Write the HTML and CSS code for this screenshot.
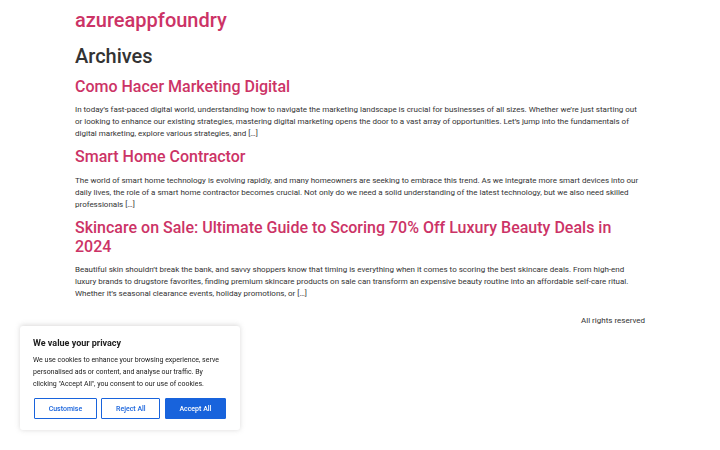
FILE: index.html
```html
<!DOCTYPE html>
<html lang="en">
<head>
<meta charset="utf-8">
<title>Archives - azureappfoundry</title>
<link rel="stylesheet" href="styles.css">
</head>
<body>
<header class="site-header">
  <div class="site-title"><a href="#">azureappfoundry</a></div>
</header>
<main class="site-main">
  <div class="page-header">
    <h1 class="entry-title">Archives</h1>
  </div>
  <div class="page-content">
    <article class="post">
      <h2 class="entry-title"><a href="#">Como Hacer Marketing Digital</a></h2>
      <p>In today’s fast-paced digital world, understanding how to navigate the marketing landscape is crucial for businesses of all sizes. Whether we’re just starting out or looking to enhance our existing strategies, mastering digital marketing opens the door to a vast array of opportunities. Let’s jump into the fundamentals of digital marketing, explore various strategies, and […]</p>
    </article>
    <article class="post">
      <h2 class="entry-title"><a href="#">Smart Home Contractor</a></h2>
      <p>The world of smart home technology is evolving rapidly, and many homeowners are seeking to embrace this trend. As we integrate more smart devices into our daily lives, the role of a smart home contractor becomes crucial. Not only do we need a solid understanding of the latest technology, but we also need skilled professionals […]</p>
    </article>
    <article class="post">
      <h2 class="entry-title"><a href="#">Skincare on Sale: Ultimate Guide to Scoring 70% Off Luxury Beauty Deals in 2024</a></h2>
      <p>Beautiful skin shouldn’t break the bank, and savvy shoppers know that timing is everything when it comes to scoring the best skincare deals. From high-end luxury brands to drugstore favorites, finding premium skincare products on sale can transform an expensive beauty routine into an affordable self-care ritual. Whether it’s seasonal clearance events, holiday promotions, or […]</p>
    </article>
  </div>
</main>
<footer class="site-footer">
  <p class="copyright">All rights reserved</p>
</footer>
<div class="cky-banner">
  <p class="cky-title">We value your privacy</p>
  <p class="cky-desc">We use cookies to enhance your browsing experience, serve personalised ads or content, and analyse our traffic. By clicking "Accept All", you consent to our use of cookies.</p>
  <div class="cky-btns">
    <button class="cky-btn cky-btn-outline">Customise</button>
    <button class="cky-btn cky-btn-outline">Reject All</button>
    <button class="cky-btn cky-btn-accept">Accept All</button>
  </div>
</div>
</body>
</html>
```
FILE: styles.css
```css
html, body {
  margin: 0;
  padding: 0;
}
body {
  background: #fff;
  color: #333333;
  font-family: Roboto, "Liberation Sans", sans-serif;
  font-size: 8px;
  line-height: 12px;
}
a {
  color: #cc3366;
  text-decoration: none;
}
.site-header,
.site-main,
.site-footer {
  max-width: 570px;
  margin: 0 auto;
}
.site-header {
  padding: 8px 0 0;
}
.site-title {
  font-size: 20px;
  line-height: 24px;
  font-weight: 500;
}
.page-header {
  padding-top: 12px;
}
h1, h2 {
  font-weight: 500;
  line-height: 1.2;
  margin: 0;
}
.page-header .entry-title {
  font-size: 20px;
  margin-bottom: 9px;
}
.post h2 {
  font-size: 16px;
  margin-bottom: 8px;
}
.post p {
  margin: 0 0 7.2px;
}
.site-footer {
  padding: 8px 0;
}
.copyright {
  margin: 0;
  text-align: right;
}
.cky-banner {
  position: fixed;
  left: 20px;
  bottom: 20px;
  width: 220px;
  box-sizing: border-box;
  padding: 11px 14px 11px 13px;
  background: #ffffff;
  border-radius: 3px;
  box-shadow: 0 -0.5px 5px 0 rgba(172, 171, 171, 0.45);
  color: #212121;
}
.cky-title {
  margin: 0 0 5px;
  font-size: 9px;
  line-height: 12px;
  font-weight: 700;
}
.cky-desc {
  margin: 0;
  font-size: 7px;
  line-height: 12px;
}
.cky-btns {
  display: flex;
  gap: 4.5px;
  margin-top: 8px;
  padding-left: 1px;
}
.cky-btn {
  flex: auto;
  font-family: Roboto, "Liberation Sans", sans-serif;
  font-size: 7px;
  line-height: 12px;
  font-weight: 500;
  padding: 3.5px 13px;
  border: 1px solid #1863dc;
  border-radius: 1px;
  cursor: pointer;
}
.cky-btn-outline {
  background: transparent;
  color: #1863dc;
}
.cky-btn-accept {
  background: #1863dc;
  color: #ffffff;
}
```
